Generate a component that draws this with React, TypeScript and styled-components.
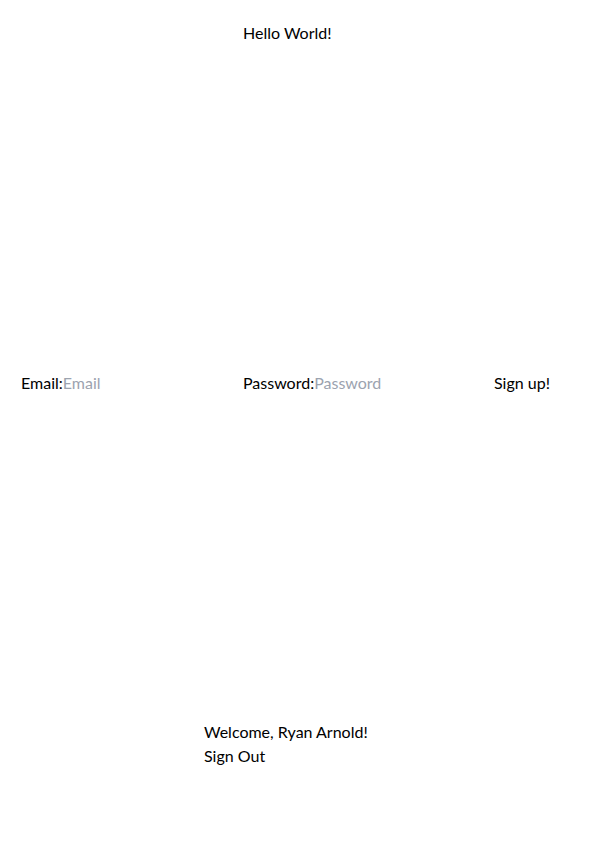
import React from 'react';
import styled, { createGlobalStyle } from 'styled-components';

const GlobalStyle = createGlobalStyle`
  html, body {
    margin: 0;
    padding: 0;
    background: #ffffff;
  }
  body {
    font-family: Lato, "Noto Sans", sans-serif;
    font-size: 16px;
    line-height: 1.5;
    color: #000000;
  }
  * {
    box-sizing: border-box;
  }
`;

const Page = styled.main`
  display: flex;
  flex-direction: column;
  padding-top: 21px;
  width: 599px;
`;

const Greeting = styled.h1`
  margin: 0 0 326px;
  padding-left: 243px;
  font-size: 16px;
  font-weight: 400;
  line-height: 24px;
`;

const SignUpForm = styled.form`
  display: grid;
  grid-template-columns: 222px 251px auto;
  align-items: center;
  padding-left: 21px;
  height: 24px;
  margin-bottom: 325px;
`;

const Field = styled.label`
  display: flex;
  align-items: center;
  line-height: 24px;
`;

const TextInput = styled.input<{ $width: number }>`
  font: inherit;
  color: inherit;
  border: none;
  outline: none;
  background: transparent;
  padding: 0;
  margin: 0;
  width: ${props => props.$width}px;

  &::placeholder {
    color: #9ca3af;
    opacity: 1;
  }
`;

const PlainButton = styled.button`
  font: inherit;
  color: inherit;
  background: transparent;
  border: none;
  padding: 0;
  margin: 0;
  cursor: pointer;
  text-align: left;
  line-height: 24px;
`;

const Session = styled.section`
  display: flex;
  flex-direction: column;
  align-items: flex-start;
  padding-left: 204px;
`;

const Welcome = styled.p`
  margin: 0;
  line-height: 24px;
`;

export default function App() {
  return (
    <>
      <GlobalStyle />
      <Page>
        <Greeting>Hello World!</Greeting>
        <SignUpForm onSubmit={e => e.preventDefault()}>
          <Field>
            Email:<TextInput type="email" placeholder="Email" $width={150} />
          </Field>
          <Field>
            Password:<TextInput type="password" placeholder="Password" $width={150} />
          </Field>
          <PlainButton type="submit">Sign up!</PlainButton>
        </SignUpForm>
        <Session>
          <Welcome>Welcome, Ryan Arnold!</Welcome>
          <PlainButton type="button">Sign Out</PlainButton>
        </Session>
      </Page>
    </>
  );
}
